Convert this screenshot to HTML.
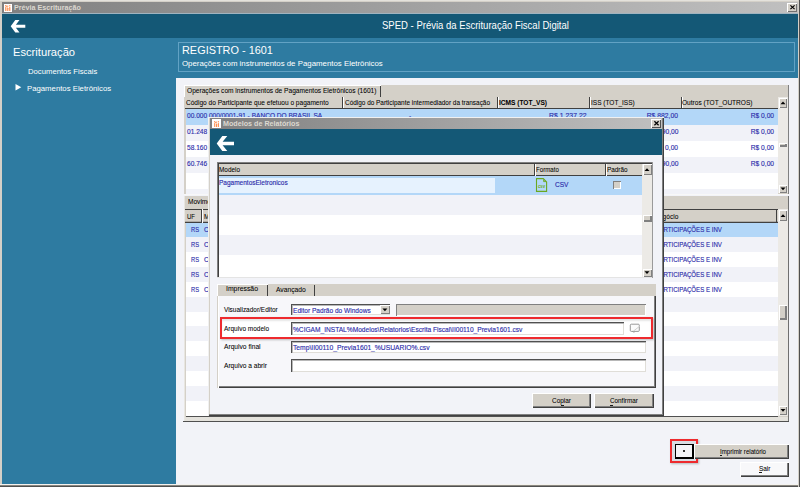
<!DOCTYPE html>
<html><head><meta charset="utf-8"><style>
html,body{margin:0;padding:0;width:800px;height:487px;overflow:hidden;}
body{position:relative;font-family:"Liberation Sans",sans-serif;}
.a{position:absolute;}
.g{-webkit-text-stroke-width:0.15px;}
.gk{-webkit-text-stroke-width:0.06px;}
.t{position:absolute;white-space:nowrap;line-height:1;font-family:"Liberation Sans",sans-serif;}
svg{overflow:visible;}
</style></head><body>
<div class="a" style="left:0px;top:0px;width:800px;height:487px;background:#d4d0c8;"></div>
<div class="a" style="left:0px;top:0px;width:800px;height:1px;background:#e4e2dc;"></div>
<div class="a" style="left:0px;top:484px;width:800px;height:1px;background:#f4f2ee;"></div>
<div class="a" style="left:0px;top:0px;width:800px;height:487px;background:#d4d0c8;"></div>
<div class="a" style="left:0px;top:0px;width:800px;height:1px;background:#e4e2dc;"></div>
<div class="a" style="left:0px;top:484px;width:800px;height:1px;background:#f4f2ee;"></div>
<div class="a" style="left:0px;top:485px;width:800px;height:1px;background:#8a8780;"></div>
<div class="a" style="left:0px;top:486px;width:800px;height:1px;background:#505050;"></div>
<div class="a" style="left:798px;top:0px;width:1px;height:487px;background:#d4d0c8;"></div>
<div class="a" style="left:799px;top:0px;width:1px;height:487px;background:#505050;"></div>
<div class="a" style="left:2px;top:2px;width:796px;height:11px;background:linear-gradient(to right,#808080,#c0c0c0);"></div>
<div class="a" style="left:2px;top:13px;width:796px;height:1px;background:#a0b4c0;"></div>
<div class="a" style="left:3.5px;top:3.5px;width:8.5px;height:8.5px;background:#ffffff;"></div>
<svg class="a" style="left:5px;top:4.8px" width="6" height="6" viewBox="0 0 6 6"><g fill="#ff8c4a"><circle cx="0.8" cy="0.8" r="0.7"/><circle cx="2.8" cy="1.1" r="0.7"/><circle cx="4.8" cy="0.8" r="0.7"/><path d="M0.6 0.8 L2.8 2.2" stroke="#ff8c4a" stroke-width="0.9"/><rect x="0.2" y="2.0" width="1.2" height="4" rx="0.5"/><rect x="2.2" y="2.8" width="1.2" height="3.2" rx="0.5"/><rect x="4.2" y="2.0" width="1.2" height="4" rx="0.5"/></g></svg>
<div class="t" style="top:4.11px;font-size:7.2px;color:#dcd8d0;font-weight:bold;left:14.4px;transform:scaleX(0.9952);transform-origin:0 0;">Prévia Escrituração</div>
<div class="a" style="left:787px;top:3px;width:9.5px;height:8.5px;background:#d4d0c8;box-shadow: inset 1px 1px 0 #fff, inset -1px -1px 0 #707070;"></div>
<svg class="a" style="left:789.5px;top:5px" width="5" height="4.5" viewBox="0 0 5 4.5"><path d="M0.4 0.3 L4.6 4.2 M4.6 0.3 L0.4 4.2" stroke="#000" stroke-width="1.15"/></svg>
<div class="a" style="left:2px;top:14px;width:796px;height:24px;background:#145876;"></div>
<svg class="a" style="left:0;top:0" width="800" height="487"><path d="M10.7 26.25 L15.3 20.1 L19.5 20.1 L15.9 24.8 L25.3 24.8 L25.3 27.7 L15.9 27.7 L19.5 32.4 L15.3 32.4 Z" fill="#fff"/></svg>
<div class="t" style="top:21.00px;font-size:10.4px;color:#ffffff;left:381.8px;transform:scaleX(0.9169);transform-origin:0 0;">SPED - Prévia da Escrituração Fiscal Digital</div>
<div class="a" style="left:2px;top:38px;width:174px;height:446px;background:#2e7ba1;"></div>
<div class="a" style="left:176px;top:38px;width:622px;height:40px;background:#2e7ba1;"></div>
<div class="t" style="top:47.03px;font-size:11.3px;color:#ffffff;left:13px;transform:scaleX(0.9889);transform-origin:0 0;">Escrituração</div>
<div class="t" style="top:67.88px;font-size:7.7px;color:#ffffff;left:27.7px;transform:scaleX(1.0012);transform-origin:0 0;">Documentos Fiscais</div>
<svg class="a" style="left:15px;top:84px" width="7" height="7" viewBox="0 0 7 7"><path d="M0.5 0 L6.3 3.2 L0.5 6.4 Z" fill="#fff"/></svg>
<div class="t" style="top:84.60px;font-size:7.8px;color:#ffffff;left:26.9px;transform:scaleX(0.9951);transform-origin:0 0;">Pagamentos Eletrônicos</div>
<div class="a" style="left:178px;top:42px;width:617px;height:30px;border:1px solid #62a2c4;box-sizing:border-box;"></div>
<div class="t" style="top:45.01px;font-size:11.8px;color:#ffffff;left:182.3px;transform:scaleX(0.9243);transform-origin:0 0;">REGISTRO - 1601</div>
<div class="t" style="top:59.95px;font-size:7.85px;color:#ffffff;left:182.3px;transform:scaleX(1.0012);transform-origin:0 0;">Operações com instrumentos de Pagamentos Eletrônicos</div>
<div class="a" style="left:176px;top:78px;width:622px;height:406px;background:#f2f3f8;"></div>
<div class="a" style="left:184px;top:85px;width:605px;height:110px;background:#d4d0c8;"></div>
<div class="a" style="left:184px;top:85px;width:197px;height:12px;background:#d4d0c8;box-shadow: inset 1px 1px 0 #fff, inset -1px 0 0 #404040;"></div>
<div class="t gk" style="top:86.53px;font-size:8.0px;color:#000;left:187px;transform:scaleX(0.8242);transform-origin:0 0;">Operações com instrumentos de Pagamentos Eletrônicos (1601)</div>
<div class="a" style="left:185px;top:97px;width:593px;height:11px;background:#d4d0c8;"></div>
<div class="a" style="left:185px;top:108px;width:593px;height:1px;background:#404040;"></div>
<div class="a" style="left:342px;top:97px;width:1px;height:11px;background:#404040;"></div>
<div class="a" style="left:343px;top:97px;width:1px;height:11px;background:#ffffff;"></div>
<div class="a" style="left:497px;top:97px;width:1px;height:11px;background:#404040;"></div>
<div class="a" style="left:498px;top:97px;width:1px;height:11px;background:#ffffff;"></div>
<div class="a" style="left:589px;top:97px;width:1px;height:11px;background:#404040;"></div>
<div class="a" style="left:590px;top:97px;width:1px;height:11px;background:#ffffff;"></div>
<div class="a" style="left:681px;top:97px;width:1px;height:11px;background:#404040;"></div>
<div class="a" style="left:682px;top:97px;width:1px;height:11px;background:#ffffff;"></div>
<div class="t gk" style="top:99.03px;font-size:8.0px;color:#000;left:186px;transform:scaleX(0.8179);transform-origin:0 0;">Código do Participante que efetuou o pagamento</div>
<div class="t gk" style="top:99.03px;font-size:8.0px;color:#000;left:344.5px;transform:scaleX(0.8030);transform-origin:0 0;">Código do Participante intermediador da transação</div>
<div class="t gk" style="top:99.03px;font-size:8.0px;color:#000;font-weight:bold;left:498.8px;transform:scaleX(0.8201);transform-origin:0 0;">ICMS (TOT_VS)</div>
<div class="t gk" style="top:99.03px;font-size:8.0px;color:#000;left:590.5px;transform:scaleX(0.8147);transform-origin:0 0;">ISS (TOT_ISS)</div>
<div class="t gk" style="top:99.03px;font-size:8.0px;color:#000;left:682px;transform:scaleX(0.8189);transform-origin:0 0;">Outros (TOT_OUTROS)</div>
<div class="a" style="left:186px;top:109px;width:592px;height:16px;background:#b3d7f8;"></div>
<div class="t g" style="top:112.23px;font-size:8.0px;color:#2c2caa;left:186.9px;transform:scaleX(0.8209);transform-origin:0 0;">00.000 000/0001-91 - BANCO DO BRASIL SA</div>
<div class="t g" style="top:112.23px;font-size:8.0px;color:#2c2caa;left:409px;transform:scaleX(0.8200);transform-origin:0 0;">-</div>
<div class="t g" style="top:112.23px;font-size:8.0px;color:#2c2caa;right:213.5px;transform:scaleX(0.8602);transform-origin:100% 0;">R$ 1.237,22</div>
<div class="t g" style="top:112.23px;font-size:8.0px;color:#2c2caa;right:121.79999999999995px;transform:scaleX(0.8450);transform-origin:100% 0;">R$ 882,00</div>
<div class="t g" style="top:112.23px;font-size:8.0px;color:#2c2caa;right:25.899999999999977px;transform:scaleX(0.8312);transform-origin:100% 0;">R$ 0,00</div>
<div class="a" style="left:186px;top:125px;width:592px;height:16px;background:#f1f2f8;"></div>
<div class="t g" style="top:128.23px;font-size:8.0px;color:#2c2caa;left:186.9px;transform:scaleX(0.8236);transform-origin:0 0;">01.248 000/0001-00 - EMPRESA</div>
<div class="t g" style="top:128.23px;font-size:8.0px;color:#2c2caa;right:213.5px;transform:scaleX(0.8312);transform-origin:100% 0;">R$ 0,00</div>
<div class="t g" style="top:128.23px;font-size:8.0px;color:#2c2caa;right:121.79999999999995px;transform:scaleX(0.8316);transform-origin:100% 0;">R$ 90,00</div>
<div class="t g" style="top:128.23px;font-size:8.0px;color:#2c2caa;right:25.899999999999977px;transform:scaleX(0.8312);transform-origin:100% 0;">R$ 0,00</div>
<div class="a" style="left:186px;top:141px;width:592px;height:16px;background:#ffffff;"></div>
<div class="t g" style="top:144.23px;font-size:8.0px;color:#2c2caa;left:186.9px;transform:scaleX(0.8236);transform-origin:0 0;">58.160 000/0001-00 - EMPRESA</div>
<div class="t g" style="top:144.23px;font-size:8.0px;color:#2c2caa;right:213.5px;transform:scaleX(0.8312);transform-origin:100% 0;">R$ 0,00</div>
<div class="t g" style="top:144.23px;font-size:8.0px;color:#2c2caa;right:121.79999999999995px;transform:scaleX(0.8312);transform-origin:100% 0;">R$ 0,00</div>
<div class="t g" style="top:144.23px;font-size:8.0px;color:#2c2caa;right:25.899999999999977px;transform:scaleX(0.8312);transform-origin:100% 0;">R$ 0,00</div>
<div class="a" style="left:186px;top:157px;width:592px;height:16px;background:#f1f2f8;"></div>
<div class="t g" style="top:160.23px;font-size:8.0px;color:#2c2caa;left:186.9px;transform:scaleX(0.8236);transform-origin:0 0;">60.746 000/0001-00 - EMPRESA</div>
<div class="t g" style="top:160.23px;font-size:8.0px;color:#2c2caa;right:213.5px;transform:scaleX(0.8312);transform-origin:100% 0;">R$ 0,00</div>
<div class="t g" style="top:160.23px;font-size:8.0px;color:#2c2caa;right:121.79999999999995px;transform:scaleX(0.8316);transform-origin:100% 0;">R$ 90,00</div>
<div class="t g" style="top:160.23px;font-size:8.0px;color:#2c2caa;right:25.899999999999977px;transform:scaleX(0.8312);transform-origin:100% 0;">R$ 0,00</div>
<div class="a" style="left:186px;top:173px;width:592px;height:16px;background:#ffffff;"></div>
<div class="a" style="left:186px;top:189px;width:592px;height:5px;background:#f1f2f8;"></div>
<div class="a" style="left:778px;top:97px;width:10px;height:96px;background:#eceae6;"></div>
<div class="a" style="left:779px;top:98px;width:8px;height:9.5px;background:#d4d0c8;box-shadow: inset 1px 1px 0 #ffffff, inset -1px -1px 0 #808080;"></div>
<svg class="a" style="left:0;top:0" width="800" height="487"><path d="M780.50 104.25 L783.00 101.55 L785.50 104.25 Z" fill="#000"/></svg>
<div class="a" style="left:779px;top:143px;width:8px;height:4px;background:#d4d0c8;box-shadow: inset 1px 1px 0 #fff, inset -1px -1px 0 #808080, inset -2px -2px 0 #808080;"></div>
<div class="a" style="left:779px;top:184.5px;width:8px;height:8.5px;background:#d4d0c8;box-shadow: inset 1px 1px 0 #ffffff, inset -1px -1px 0 #808080;"></div>
<svg class="a" style="left:0;top:0" width="800" height="487"><path d="M780.50 187.55 L783.00 190.25 L785.50 187.55 Z" fill="#000"/></svg>
<div class="a" style="left:787.5px;top:85px;width:1.2px;height:109px;background:#808080;"></div>
<div class="a" style="left:184px;top:194px;width:605px;height:1.3px;background:#f8f8f8;"></div>
<div class="a" style="left:184px;top:196px;width:605px;height:225px;background:#d4d0c8;box-shadow: inset 1px 0 0 #e8e6e0;"></div>
<div class="a" style="left:185px;top:416.5px;width:603px;height:4px;background:#e4e2dc;"></div>
<div class="t gk" style="top:197.73px;font-size:8.0px;color:#000;left:187.7px;transform:scaleX(0.8200);transform-origin:0 0;">Movimentos</div>
<div class="a" style="left:185px;top:209px;width:593px;height:13.5px;background:#d4d0c8;box-shadow: inset 0 1px 0 #404040, inset 0 -1.3px 0 #404040;"></div>
<div class="a" style="left:201px;top:209px;width:1px;height:13.5px;background:#404040;"></div>
<div class="a" style="left:202px;top:209px;width:1px;height:13.5px;background:#fff;"></div>
<div class="a" style="left:776px;top:209px;width:1px;height:13.5px;background:#404040;"></div>
<div class="t gk" style="top:213.23px;font-size:8.0px;color:#000;left:186.5px;transform:scaleX(0.7496);transform-origin:0 0;">UF</div>
<div class="t gk" style="top:213.23px;font-size:8.0px;color:#000;left:204px;transform:scaleX(0.8200);transform-origin:0 0;">Município</div>
<div class="t gk" style="top:213.23px;font-size:8.0px;color:#000;right:122px;transform:scaleX(0.8200);transform-origin:100% 0;">Atividade do negócio</div>
<div class="a" style="left:186px;top:222.5px;width:592px;height:14.85px;background:#b3d7f8;"></div>
<div class="t g" style="top:226.43px;font-size:8.0px;color:#2c2caa;left:190.8px;transform:scaleX(0.7191);transform-origin:0 0;">RS</div>
<div class="t g" style="top:226.43px;font-size:8.0px;color:#2c2caa;left:204px;transform:scaleX(0.8200);transform-origin:0 0;">CAMPO BOM</div>
<div class="t g" style="top:226.43px;font-size:8.0px;color:#2c2caa;right:78px;transform:scaleX(0.7636);transform-origin:100% 0;">HOLDINGS, PARTICIPAÇÕES E INV</div>
<div class="a" style="left:186px;top:237.35px;width:592px;height:14.85px;background:#f1f2f8;"></div>
<div class="t g" style="top:241.28px;font-size:8.0px;color:#2c2caa;left:190.8px;transform:scaleX(0.7191);transform-origin:0 0;">RS</div>
<div class="t g" style="top:241.28px;font-size:8.0px;color:#2c2caa;left:204px;transform:scaleX(0.8200);transform-origin:0 0;">CAMPO BOM</div>
<div class="t g" style="top:241.28px;font-size:8.0px;color:#2c2caa;right:78px;transform:scaleX(0.7636);transform-origin:100% 0;">HOLDINGS, PARTICIPAÇÕES E INV</div>
<div class="a" style="left:186px;top:252.2px;width:592px;height:14.85px;background:#ffffff;"></div>
<div class="t g" style="top:256.13px;font-size:8.0px;color:#2c2caa;left:190.8px;transform:scaleX(0.7191);transform-origin:0 0;">RS</div>
<div class="t g" style="top:256.13px;font-size:8.0px;color:#2c2caa;left:204px;transform:scaleX(0.8200);transform-origin:0 0;">CAMPO BOM</div>
<div class="t g" style="top:256.13px;font-size:8.0px;color:#2c2caa;right:78px;transform:scaleX(0.7636);transform-origin:100% 0;">HOLDINGS, PARTICIPAÇÕES E INV</div>
<div class="a" style="left:186px;top:267.05px;width:592px;height:14.85px;background:#f1f2f8;"></div>
<div class="t g" style="top:270.98px;font-size:8.0px;color:#2c2caa;left:190.8px;transform:scaleX(0.7191);transform-origin:0 0;">RS</div>
<div class="t g" style="top:270.98px;font-size:8.0px;color:#2c2caa;left:204px;transform:scaleX(0.8200);transform-origin:0 0;">CAMPO BOM</div>
<div class="t g" style="top:270.98px;font-size:8.0px;color:#2c2caa;right:78px;transform:scaleX(0.7636);transform-origin:100% 0;">HOLDINGS, PARTICIPAÇÕES E INV</div>
<div class="a" style="left:186px;top:281.9px;width:592px;height:14.85px;background:#ffffff;"></div>
<div class="t g" style="top:285.83px;font-size:8.0px;color:#2c2caa;left:190.8px;transform:scaleX(0.7191);transform-origin:0 0;">RS</div>
<div class="t g" style="top:285.83px;font-size:8.0px;color:#2c2caa;left:204px;transform:scaleX(0.8200);transform-origin:0 0;">CAMPO BOM</div>
<div class="t g" style="top:285.83px;font-size:8.0px;color:#2c2caa;right:78px;transform:scaleX(0.7636);transform-origin:100% 0;">HOLDINGS, PARTICIPAÇÕES E INV</div>
<div class="a" style="left:186px;top:296.75px;width:592px;height:14.85px;background:#f1f2f8;"></div>
<div class="a" style="left:186px;top:311.6px;width:592px;height:14.85px;background:#ffffff;"></div>
<div class="a" style="left:186px;top:326.45px;width:592px;height:14.85px;background:#f1f2f8;"></div>
<div class="a" style="left:186px;top:341.3px;width:592px;height:14.85px;background:#ffffff;"></div>
<div class="a" style="left:186px;top:356.15px;width:592px;height:14.85px;background:#f1f2f8;"></div>
<div class="a" style="left:186px;top:371.0px;width:592px;height:14.85px;background:#ffffff;"></div>
<div class="a" style="left:186px;top:385.85px;width:592px;height:14.85px;background:#f1f2f8;"></div>
<div class="a" style="left:186px;top:400.7px;width:592px;height:14.85px;background:#ffffff;"></div>
<div class="a" style="left:186px;top:415.8px;width:592px;height:1.2px;background:#505050;"></div>
<div class="a" style="left:778px;top:209px;width:10px;height:207px;background:#eceae6;"></div>
<div class="a" style="left:779px;top:210px;width:8px;height:11px;background:#d4d0c8;box-shadow: inset 1px 1px 0 #ffffff, inset -1px -1px 0 #808080;"></div>
<svg class="a" style="left:0;top:0" width="800" height="487"><path d="M780.50 217.00 L783.00 214.30 L785.50 217.00 Z" fill="#000"/></svg>
<div class="a" style="left:779px;top:305px;width:8px;height:15px;background:#d4d0c8;box-shadow: inset 1px 1px 0 #fff, inset -1px -1px 0 #808080, inset -2px -2px 0 #808080;"></div>
<div class="a" style="left:779px;top:406px;width:8px;height:8.5px;background:#d4d0c8;box-shadow: inset 1px 1px 0 #ffffff, inset -1px -1px 0 #808080;"></div>
<svg class="a" style="left:0;top:0" width="800" height="487"><path d="M780.50 409.05 L783.00 411.75 L785.50 409.05 Z" fill="#000"/></svg>
<div class="a" style="left:183px;top:420.5px;width:606px;height:1.2px;background:#505050;"></div>
<div class="a" style="left:788px;top:196px;width:1px;height:225px;background:#707070;"></div>
<div class="a" style="left:670px;top:439px;width:28px;height:24px;background:#d9dde4;border:2px solid #ee2a2e;box-sizing:border-box;box-shadow:1px 1px 2px rgba(0,0,0,.25);"></div>
<div class="a" style="left:675px;top:444px;width:19px;height:15px;background:#f4f4f8;border:1px solid #000;border-right-width:2px;border-bottom-width:2px;box-sizing:border-box;"></div>
<div class="a" style="left:683px;top:450px;width:1.5px;height:1.5px;background:#333;"></div>
<div class="a" style="left:694px;top:444px;width:95px;height:15px;background:#d4d0c8;box-shadow: inset 1px 1px 0 #ffffff, inset -1px -1px 0 #404040, inset -2px -2px 0 #808080;"></div>
<div class="t gk" style="top:447.63px;font-size:8.0px;color:#000;left:719.9px;transform:scaleX(0.7665);transform-origin:0 0;">Imprimir relatório</div>
<div class="a" style="left:740px;top:462px;width:49px;height:14.5px;background:#f8f8fa;box-shadow: inset 1px 1px 0 #ffffff, inset -1px -1px 0 #404040, inset -2px -2px 0 #808080;"></div>
<div class="t gk" style="top:465.13px;font-size:8.0px;color:#000;left:758.9px;transform:scaleX(0.8009);transform-origin:0 0;">Sair</div>
<div class="a" style="left:208px;top:117px;width:456px;height:298.5px;background:#d4d0c8;box-shadow: inset 1px 1px 0 #f0f0f0, inset -1px -1px 0 #404040, inset -2px -2px 0 #808080;"></div>
<div class="a" style="left:210px;top:118px;width:452px;height:11px;background:linear-gradient(to right,#808080,#c0c0c0);"></div>
<div class="a" style="left:212px;top:119px;width:9px;height:9px;background:#ffffff;"></div>
<svg class="a" style="left:213.8px;top:120.8px" width="5.5" height="6" viewBox="0 0 6 6" preserveAspectRatio="none"><g fill="#ff8c4a"><circle cx="0.8" cy="0.8" r="0.7"/><circle cx="2.8" cy="1.1" r="0.7"/><circle cx="4.8" cy="0.8" r="0.7"/><path d="M0.6 0.8 L2.8 2.2" stroke="#ff8c4a" stroke-width="0.9"/><rect x="0.2" y="2.0" width="1.2" height="4" rx="0.5"/><rect x="2.2" y="2.8" width="1.2" height="3.2" rx="0.5"/><rect x="4.2" y="2.0" width="1.2" height="4" rx="0.5"/></g></svg>
<div class="t" style="top:120.11px;font-size:7.2px;color:#dcd8d0;font-weight:bold;left:223px;transform:scaleX(0.9963);transform-origin:0 0;">Modelos de Relatórios</div>
<div class="a" style="left:651px;top:119.2px;width:9.7px;height:8.5px;background:#d4d0c8;box-shadow: inset 1px 1px 0 #fff, inset -1px -1px 0 #505050;"></div>
<svg class="a" style="left:653.5px;top:121.3px" width="5" height="4.5" viewBox="0 0 5 4.5"><path d="M0.4 0.3 L4.6 4.2 M4.6 0.3 L0.4 4.2" stroke="#000" stroke-width="1.2"/></svg>
<div class="a" style="left:210px;top:129px;width:452px;height:25.5px;background:#145876;"></div>
<svg class="a" style="left:0;top:0" width="800" height="487"><path d="M216.7 143.5 L222.3 136 L227.3 136 L222.6 141.8 L234 141.8 L234 145.2 L222.6 145.2 L227.3 151 L222.3 151 Z" fill="#fff"/></svg>
<div class="a" style="left:210px;top:154.5px;width:452px;height:259px;background:#f2f3f8;"></div>
<div class="a" style="left:217px;top:162px;width:436px;height:116px;background:#ffffff;box-shadow: inset 1px 1px 0 #808080, inset 2px 2px 0 #404040, inset -1px -1px 0 #9a9a9a;"></div>
<div class="a" style="left:219px;top:163.5px;width:423px;height:12px;background:#d4d0c8;"></div>
<div class="a" style="left:219px;top:175px;width:423px;height:1px;background:#404040;"></div>
<div class="a" style="left:534px;top:163.5px;width:1px;height:12px;background:#404040;"></div>
<div class="a" style="left:535px;top:163.5px;width:1px;height:12px;background:#fff;"></div>
<div class="a" style="left:605px;top:163.5px;width:1px;height:12px;background:#404040;"></div>
<div class="a" style="left:606px;top:163.5px;width:1px;height:12px;background:#fff;"></div>
<div class="t gk" style="top:166.13px;font-size:8.0px;color:#000;left:219px;transform:scaleX(0.8000);transform-origin:0 0;">Modelo</div>
<div class="t gk" style="top:166.13px;font-size:8.0px;color:#000;left:536px;transform:scaleX(0.7652);transform-origin:0 0;">Formato</div>
<div class="t gk" style="top:166.13px;font-size:8.0px;color:#000;left:607.2px;transform:scaleX(0.7947);transform-origin:0 0;">Padrão</div>
<div class="a" style="left:219px;top:176px;width:423px;height:19px;background:#b3d7f8;"></div>
<div class="a" style="left:219px;top:177.8px;width:276px;height:15.2px;background:#e6f2fe;"></div>
<div class="t g" style="top:178.93px;font-size:8.0px;color:#2c2caa;left:219px;transform:scaleX(0.8130);transform-origin:0 0;">PagamentosEletronicos</div>
<svg class="a" style="left:535px;top:177px" width="13" height="16" viewBox="0 0 13 16"><path d="M1.5 1.6 H8.3 L11.6 5 V14.4 H1.5 Z" fill="none" stroke="#6aa820" stroke-width="1.1"/><path d="M8.6 2.5 V4.6 H10.8" fill="none" stroke="#6aa820" stroke-width="0.9"/><text x="6.5" y="9.6" font-size="4.2" font-family="Liberation Sans" font-weight="bold" fill="#6aa820" text-anchor="middle" transform="scale(1,1.1)">csv</text></svg>
<div class="t g" style="top:180.93px;font-size:8.0px;color:#2c2caa;left:554.7px;transform:scaleX(0.8205);transform-origin:0 0;">CSV</div>
<div class="a" style="left:613.2px;top:181px;width:7.5px;height:7.5px;background:#d4d0c8;box-shadow: inset 1px 1px 0 #808080, inset -1px -1px 0 #fff;"></div>
<div class="a" style="left:219px;top:195px;width:423px;height:20px;background:#f1f2f8;"></div>
<div class="a" style="left:219px;top:215px;width:423px;height:20px;background:#ffffff;"></div>
<div class="a" style="left:219px;top:235px;width:423px;height:20px;background:#f1f2f8;"></div>
<div class="a" style="left:219px;top:255px;width:423px;height:20px;background:#ffffff;"></div>
<div class="a" style="left:642px;top:163.5px;width:10px;height:113px;background:#eceae6;"></div>
<div class="a" style="left:642.5px;top:164px;width:9px;height:11px;background:#d4d0c8;box-shadow: inset 1px 1px 0 #ffffff, inset -1px -1px 0 #808080;"></div>
<svg class="a" style="left:0;top:0" width="800" height="487"><path d="M644.50 171.00 L647.00 168.30 L649.50 171.00 Z" fill="#000"/></svg>
<div class="a" style="left:642.5px;top:215px;width:9px;height:7px;background:#d4d0c8;box-shadow: inset 1px 1px 0 #fff, inset -1px -1px 0 #808080, inset -2px -2px 0 #808080;"></div>
<div class="a" style="left:642.5px;top:268.5px;width:9px;height:8px;background:#d4d0c8;box-shadow: inset 1px 1px 0 #ffffff, inset -1px -1px 0 #808080;"></div>
<svg class="a" style="left:0;top:0" width="800" height="487"><path d="M644.50 271.30 L647.00 274.00 L649.50 271.30 Z" fill="#000"/></svg>
<div class="a" style="left:217px;top:277px;width:436px;height:1px;background:#e4e4e4;"></div>
<div class="a" style="left:652px;top:162px;width:1px;height:116px;background:#9a9a9a;"></div>
<div class="a" style="left:217px;top:283.5px;width:439px;height:12.5px;background:#d4d0c8;"></div>
<div class="a" style="left:217px;top:283.5px;width:51px;height:13px;background:#d4d0c8;box-shadow: inset 1px 1px 0 #fff, inset -1px 0 0 #404040;"></div>
<div class="a" style="left:268px;top:285px;width:47px;height:11px;background:#d4d0c8;box-shadow: inset -1px 0 0 #404040;"></div>
<div class="t gk" style="top:285.03px;font-size:8.0px;color:#000;left:226px;transform:scaleX(0.8565);transform-origin:0 0;">Impressão</div>
<div class="t gk" style="top:286.43px;font-size:8.0px;color:#000;left:275.9px;transform:scaleX(0.8409);transform-origin:0 0;">Avançado</div>
<div class="a" style="left:217px;top:296px;width:439px;height:92px;background:#f7f7fa;box-shadow: inset 1px 0 0 #d4d0c8, inset 2px 0 0 #ffffff, inset -1px -1px 0 #404040, inset -2px -2px 0 #808080;"></div>
<div class="t gk" style="top:305.83px;font-size:8.0px;color:#000;left:223.8px;transform:scaleX(0.8068);transform-origin:0 0;">Visualizador/Editor</div>
<div class="a" style="left:291px;top:303.7px;width:99px;height:11.5px;background:#ffffff;box-shadow: inset 1px 1px 0 #505050, inset 2px 2px 0 #b8b8b8, inset -1px -1px 0 #e0ded8;"></div>
<div class="t g" style="top:306.53px;font-size:8.0px;color:#2c2caa;left:292.8px;transform:scaleX(0.8203);transform-origin:0 0;">Editor Padrão do Windows</div>
<div class="a" style="left:380.2px;top:305.2px;width:9.4px;height:9px;background:#d4d0c8;box-shadow: inset 1px 1px 0 #ffffff, inset -1px -1px 0 #808080;"></div>
<svg class="a" style="left:0;top:0" width="800" height="487"><path d="M382.40 308.50 L384.90 311.20 L387.40 308.50 Z" fill="#000"/></svg>
<div class="a" style="left:396px;top:303.7px;width:249.5px;height:12.3px;background:#d4d0c8;box-shadow: inset 1px 1px 0 #808080, inset -1px -1px 0 #fff;"></div>
<div class="a" style="left:220px;top:317px;width:433px;height:22px;background:#ffffff;border:2px solid #ee2a2e;box-sizing:border-box;box-shadow:1px 1px 2px rgba(0,0,0,.25), inset 0 2px 2px rgba(0,0,0,.10);"></div>
<div class="t gk" style="top:324.73px;font-size:8.0px;color:#000;left:223.8px;transform:scaleX(0.8112);transform-origin:0 0;">Arquivo modelo</div>
<div class="a" style="left:291px;top:322px;width:333px;height:12.5px;background:#ffffff;box-shadow: inset 1px 1px 0 #505050, inset 2px 2px 0 #b8b8b8, inset -1px -1px 0 #e0ded8;"></div>
<div class="t g" style="top:325.53px;font-size:8.0px;color:#2c2caa;left:293px;transform:scaleX(0.8250);transform-origin:0 0;">%CIGAM_INSTAL%Modelos\Relatorios\Escrita Fiscal\II00110_Previa1601.csv</div>
<svg class="a" style="left:0;top:0" width="800" height="487"><rect x="630.3" y="324.2" width="9" height="7.2" rx="1" fill="#fbfbfb" stroke="#8c8c8c" stroke-width="0.9"/><path d="M633.5 331 L640 326" stroke="#c8c8c8" stroke-width="0.9"/><path d="M633 331.6 L634 332.6" stroke="#777" stroke-width="0.9"/></svg>
<div class="t gk" style="top:343.13px;font-size:8.0px;color:#000;left:223.7px;transform:scaleX(0.8312);transform-origin:0 0;">Arquivo final</div>
<div class="a" style="left:291px;top:340.5px;width:354.5px;height:12.5px;background:#ffffff;box-shadow: inset 1px 1px 0 #505050, inset 2px 2px 0 #b8b8b8, inset -1px -1px 0 #e0ded8;"></div>
<div class="t g" style="top:344.13px;font-size:8.0px;color:#2c2caa;left:292.5px;transform:scaleX(0.8418);transform-origin:0 0;">Temp\II00110_Previa1601_%USUARIO%.csv</div>
<div class="t gk" style="top:361.63px;font-size:8.0px;color:#000;left:223.7px;transform:scaleX(0.8264);transform-origin:0 0;">Arquivo a abrir</div>
<div class="a" style="left:291px;top:359px;width:354.5px;height:12.5px;background:#ffffff;box-shadow: inset 1px 1px 0 #505050, inset 2px 2px 0 #b8b8b8, inset -1px -1px 0 #e0ded8;"></div>
<div class="a" style="left:531.5px;top:393px;width:59.5px;height:15px;background:#d4d0c8;box-shadow: inset 1px 1px 0 #ffffff, inset -1px -1px 0 #404040, inset -2px -2px 0 #808080;"></div>
<div class="t gk" style="top:396.83px;font-size:8.0px;color:#000;left:551.7px;transform:scaleX(0.8058);transform-origin:0 0;">Copiar</div>
<div class="a" style="left:594px;top:393px;width:60px;height:15px;background:#d4d0c8;box-shadow: inset 1px 1px 0 #ffffff, inset -1px -1px 0 #404040, inset -2px -2px 0 #808080;"></div>
<div class="t gk" style="top:396.83px;font-size:8.0px;color:#000;left:609.7px;transform:scaleX(0.7915);transform-origin:0 0;">Confirmar</div>
<div class="a" style="left:560.7px;top:404.6px;width:3px;height:0.8px;background:#1a1a1a;"></div>
<div class="a" style="left:609.8px;top:404.6px;width:3.5px;height:0.8px;background:#1a1a1a;"></div>
<div class="a" style="left:720px;top:454.9px;width:2.2px;height:0.8px;background:#1a1a1a;"></div>
<div class="a" style="left:759px;top:472.4px;width:3.2px;height:0.8px;background:#1a1a1a;"></div>
</body></html>
